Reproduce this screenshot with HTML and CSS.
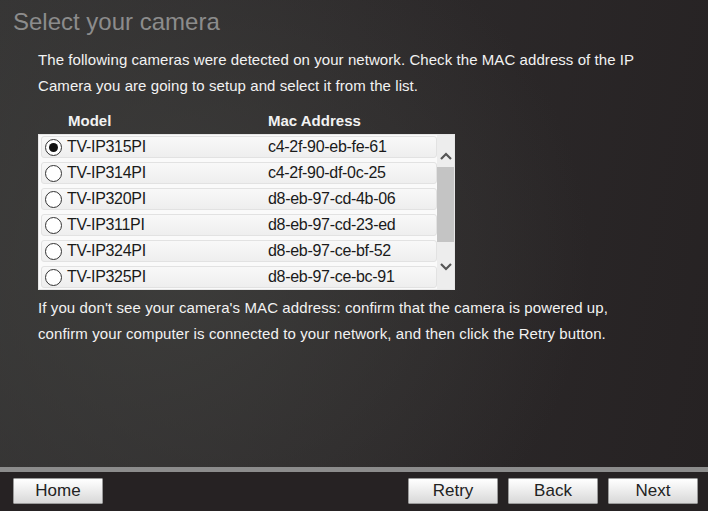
FILE: index.html
```html
<!DOCTYPE html>
<html lang="en">
<head>
    <meta charset="UTF-8">
    <meta name="viewport" content="width=device-width, initial-scale=1.0">
    <title>Select your camera</title>
    <link rel="stylesheet" href="styles.css">
</head>
<body>
    <div class="wizard">
        <div class="content">
            <h1 class="title">Select your camera</h1>
            <p class="intro">The following cameras were detected on your network. Check the MAC address of the IP Camera you are going to setup and select it from the list.</p>

            <div class="list-head">
                <span class="col-model">Model</span>
                <span class="col-mac">Mac Address</span>
            </div>
            <div class="camera-list">
                <div class="rows">
                    <label class="row">
                        <span class="radio checked"></span>
                        <span class="col-model">TV-IP315PI</span>
                        <span class="col-mac">c4-2f-90-eb-fe-61</span>
                    </label>
                    <label class="row">
                        <span class="radio"></span>
                        <span class="col-model">TV-IP314PI</span>
                        <span class="col-mac">c4-2f-90-df-0c-25</span>
                    </label>
                    <label class="row">
                        <span class="radio"></span>
                        <span class="col-model">TV-IP320PI</span>
                        <span class="col-mac">d8-eb-97-cd-4b-06</span>
                    </label>
                    <label class="row">
                        <span class="radio"></span>
                        <span class="col-model">TV-IP311PI</span>
                        <span class="col-mac">d8-eb-97-cd-23-ed</span>
                    </label>
                    <label class="row">
                        <span class="radio"></span>
                        <span class="col-model">TV-IP324PI</span>
                        <span class="col-mac">d8-eb-97-ce-bf-52</span>
                    </label>
                    <label class="row">
                        <span class="radio"></span>
                        <span class="col-model">TV-IP325PI</span>
                        <span class="col-mac">d8-eb-97-ce-bc-91</span>
                    </label>
                </div>
                <div class="scrollbar">
                    <svg class="arrow" width="14" height="10" viewBox="0 0 14 10"><polyline points="2,8 7,3 12,8" fill="none" stroke="#555" stroke-width="2.2"/></svg>
                    <div class="thumb"></div>
                    <svg class="arrow" width="14" height="10" viewBox="0 0 14 10"><polyline points="2,2 7,7 12,2" fill="none" stroke="#555" stroke-width="2.2"/></svg>
                </div>
            </div>

            <p class="help">If you don't see your camera's MAC address: confirm that the camera is powered up, confirm your computer is connected to your network, and then click the Retry button.</p>
        </div>

        <div class="footer">
            <button class="btn">Home</button>
            <div class="spacer"></div>
            <button class="btn">Retry</button>
            <button class="btn">Back</button>
            <button class="btn">Next</button>
        </div>
    </div>
</body>
</html>
```

FILE: styles.css
```css
body {
    margin: 0;
    font-family: "Liberation Sans", Arial, sans-serif;
    background: #262223;
}

.wizard {
    width: 708px;
    height: 511px;
    display: flex;
    flex-direction: column;
    background:
        radial-gradient(ellipse 420px 380px at 170px 260px, rgba(62, 62, 60, 0.9), rgba(62, 62, 60, 0) 100%),
        linear-gradient(100deg, #353434 0%, #2d2a2b 45%, #262223 100%);
}

.content {
    flex: 1;
    padding: 0 0 0 38px;
}

.title {
    margin: 8px 0 0 -25px;
    font-size: 24px;
    font-weight: normal;
    color: #8c8c8c;
    line-height: 28px;
}

.intro {
    margin: 11px 0 0 0;
    width: 630px;
    font-size: 15px;
    line-height: 26px;
    letter-spacing: 0.07px;
    color: #f2f2f2;
}

.list-head {
    display: flex;
    margin-top: 12px;
    padding-left: 30px;
    height: 23px;
    font-size: 15px;
    font-weight: bold;
    color: #f2f2f2;
    line-height: 20px;
}

.col-model {
    width: 200px;
}

.camera-list {
    display: flex;
    width: 417px;
    height: 156px;
    box-sizing: border-box;
    background: #fafafa;
    border: 1px solid #e6e6e6;
    padding: 1px 0 0 2px;
}

.rows {
    flex: 1;
    display: flex;
    flex-direction: column;
    gap: 4px;
}

.row {
    display: flex;
    align-items: center;
    height: 22px;
    box-sizing: border-box;
    padding-left: 3px;
    border: 1px solid #e2e2e2;
    border-radius: 3px;
    background: linear-gradient(#f8f8f8, #eeeeee);
    font-size: 16px;
    color: #1a1a1a;
    letter-spacing: -0.3px;
}

.radio {
    width: 17px;
    height: 17px;
    box-sizing: border-box;
    border: 1.5px solid #333;
    border-radius: 50%;
    background: #fff;
    margin-right: 5px;
    display: flex;
    align-items: center;
    justify-content: center;
}

.radio.checked::after {
    content: "";
    width: 9px;
    height: 9px;
    border-radius: 50%;
    background: #111;
}

.row .col-model {
    width: 201px;
}

.scrollbar {
    width: 17px;
    margin-top: -1px;
    background: #ededed;
    display: flex;
    flex-direction: column;
    align-items: center;
}

.arrow {
    margin: 16px 0 6px;
}

.arrow:last-child {
    margin: 20px 0 0;
}

.thumb {
    width: 17px;
    height: 75px;
    background: #c4c4c4;
}

.help {
    margin: 5px 0 0 0;
    width: 600px;
    font-size: 15px;
    line-height: 26px;
    letter-spacing: 0.1px;
    color: #f2f2f2;
}

.footer {
    height: 33px;
    border-top: 5px solid #8c8c8c;
    background: #262223;
    display: flex;
    align-items: flex-start;
    padding: 6px 10px 0 13px;
    gap: 10px;
}

.spacer {
    flex: 1;
}

.btn {
    width: 90px;
    height: 26px;
    font-family: "Liberation Sans", Arial, sans-serif;
    font-size: 17px;
    color: #222;
    background: linear-gradient(#ffffff 0%, #ececec 50%, #d8d8d8 100%);
    border: 1px solid #9a9a9a;
    border-radius: 1px;
    padding: 0;
}
```
